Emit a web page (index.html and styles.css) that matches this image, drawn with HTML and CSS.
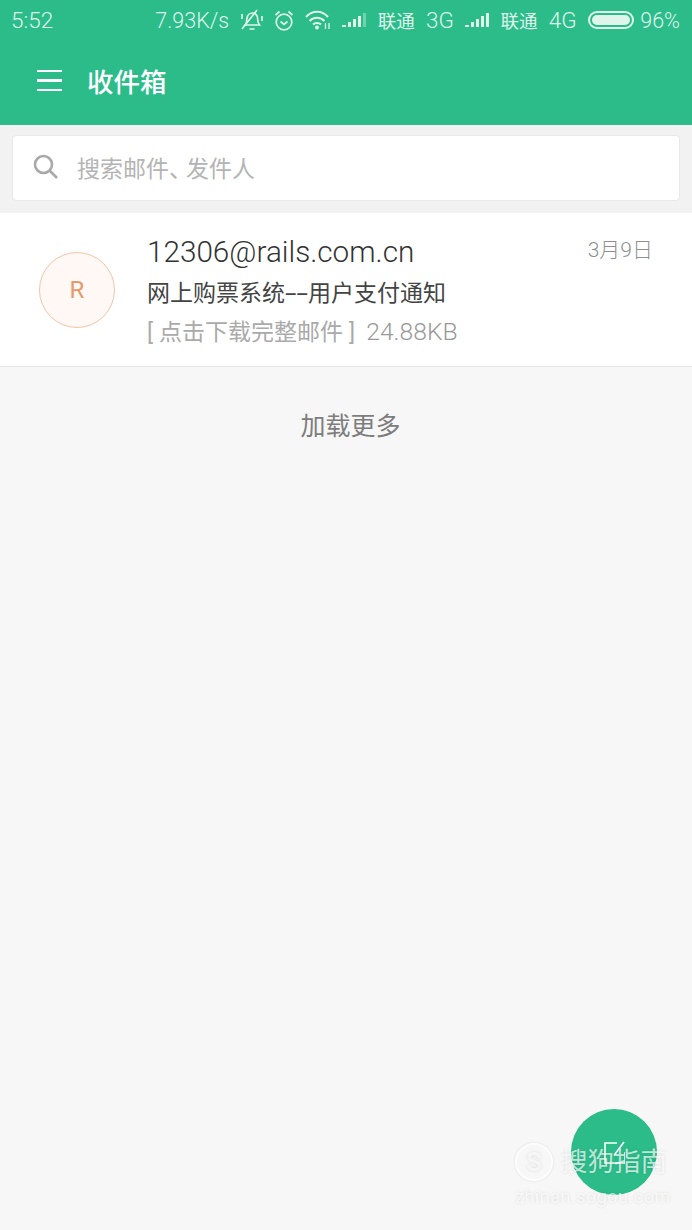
FILE: index.html
```html
<!DOCTYPE html>
<html lang="zh-CN">
<head>
  <meta charset="UTF-8">
  <meta name="viewport" content="width=device-width, initial-scale=1.0">
  <title>收件箱</title>
  <link rel="stylesheet" href="styles.css">
</head>
<body>
  <header class="top">
    <div class="status">
      <span class="time">5:52</span>
      <div class="status-right">
        <span class="speed">7.93K/s</span>
        <svg class="ic" width="22" height="22" viewBox="0 0 22 22" fill="none" stroke="currentColor" stroke-width="1.700">
          <path d="M4 16c2-2 1.500-4 2-7s3-5 5.500-5 5 2 5 5 .5 5 2 7z"/>
          <path d="M8.500 20h5M1 20L16 1M1 5v5M21 7v5"/>
        </svg>
        <svg class="ic" width="20" height="21" viewBox="0 0 20 21" fill="none" stroke="currentColor" stroke-width="1.700">
          <circle cx="10" cy="12" r="7.800"/>
          <path d="M6.500 11.500l3.500 3 3.500-3M1.500 5l4-3.500M18.500 5l-4-3.500"/>
        </svg>
        <svg class="ic" width="26" height="20" viewBox="0 0 26 20" fill="none" stroke="currentColor" stroke-width="2">
          <path d="M1 7c6-7 16-7 22 0M4.500 11c4-4.500 11-4.500 15 0M8 14.500c2-2 6-2 8 0"/>
          <circle cx="12" cy="17.500" r="2" fill="currentColor" stroke="none"/>
          <path d="M20.500 13v6M24 13v6" stroke-width="1.300"/>
        </svg>
        <svg class="ic" width="24" height="16" viewBox="0 0 24 16" fill="currentColor">
          <rect x="0" y="13" width="4" height="2"/><rect x="6" y="10" width="3" height="5"/><rect x="11" y="7" width="3" height="8"/><rect x="16" y="4" width="3" height="11"/><rect x="21" y="1" width="3" height="14" opacity=".4"/>
        </svg>
        <span class="zh">联通</span>
        <span class="net">3G</span>
        <svg class="ic" width="24" height="16" viewBox="0 0 24 16" fill="currentColor">
          <rect x="0" y="13" width="4" height="2"/><rect x="6" y="10" width="3" height="5"/><rect x="11" y="7" width="3" height="8"/><rect x="16" y="4" width="3" height="11"/><rect x="21" y="1" width="3" height="14"/>
        </svg>
        <span class="zh">联通</span>
        <span class="net">4G</span>
        <div class="battery"><div class="battery-fill"></div></div>
        <span class="percent">96%</span>
      </div>
    </div>
    <div class="appbar">
      <div class="menu"><i></i><i></i><i></i></div>
      <h1>收件箱</h1>
    </div>
  </header>

  <div class="search-wrap">
    <div class="search">
      <svg width="26" height="26" viewBox="0 0 26 26" fill="none" stroke="#a9a9a9" stroke-width="2.600">
        <circle cx="10.500" cy="10.500" r="8.500"/>
        <path d="M16.500 16.500l7.500 7.500"/>
      </svg>
      <span>搜索邮件<span class="tight">、</span>发件人</span>
    </div>
  </div>

  <section class="mail">
    <div class="avatar">R</div>
    <div class="mail-body">
      <div class="mail-top">
        <span class="sender">12306@rails.com.cn</span>
        <span class="date">3月9日</span>
      </div>
      <div class="subject">网上购票系统<span class="dash">--</span>用户支付通知</div>
      <div class="preview"><span class="br-open">[</span>点击下载完整邮件<span class="br-close">]</span><span class="size">24.88KB</span></div>
    </div>
  </section>

  <div class="more">加载更多</div>

  <button class="fab">
    <svg width="22" height="23" viewBox="0 0 22 23" fill="none" stroke="#fff" stroke-width="1.600">
      <path d="M14 2H2v20h20V11M11 14.500L21 1"/>
    </svg>
  </button>

  <div class="mark">
    <div class="mark-top">
      <span class="mark-logo"><span class="mark-s">S</span></span>
      <span class="mark-name">搜狗指南</span>
    </div>
    <div class="mark-url">zhinan.sogou.com</div>
  </div>
</body>
</html>
```

FILE: styles.css
```css
* {
  box-sizing: border-box;
}
html, body {
  height: 100%;
}
body {
  margin: 0;
  position: relative;
  overflow: hidden;
  background: #f7f7f7;
  font-family: Roboto, "Noto Sans CJK SC", sans-serif;
}
.top {
  height: 125px;
  background: #2cbc8a;
  color: #fff;
}
.status {
  height: 40px;
  padding: 0 12px 0 11px;
  display: flex;
  align-items: center;
  justify-content: space-between;
  font-size: 21.500px;
  font-weight: 300;
  color: #dff5ec;
}
.time {
  font-size: 22.500px;
}
.status-right {
  display: flex;
  align-items: center;
  gap: 11.300px;
}
.zh {
  font-size: 18.500px;
  font-weight: 400;
}
.net {
  font-size: 22.500px;
}
.percent {
  margin-left: -5px;
}
.ic {
  display: block;
}
.battery {
  width: 46px;
  height: 18px;
  border: 2px solid #dff5ec;
  border-radius: 9px;
  padding: 2px;
}
.battery-fill {
  height: 100%;
  background: #dff5ec;
  border-radius: 5px;
}
.appbar {
  height: 85px;
  padding: 0 0 4px 37px;
  display: flex;
  align-items: center;
}
.menu {
  width: 25px;
  display: flex;
  flex-direction: column;
  gap: 7px;
}
.menu i {
  display: block;
  height: 2.500px;
  background: #fff;
}
.appbar h1 {
  margin: 0 0 0 25px;
  font-size: 26.500px;
  font-weight: 500;
}
.search-wrap {
  padding: 10px 12px 12px;
  background: #f2f2f2;
}
.search {
  height: 66px;
  background: #fff;
  border: 1px solid #e8e8e8;
  border-radius: 4px;
  padding: 0 0 3px 20px;
  display: flex;
  align-items: center;
  gap: 18px;
  font-size: 23px;
  color: #b4b4b4;
}
.tight {
  letter-spacing: -6px;
}
.mail {
  height: 154px;
  background: #fff;
  border-bottom: 1px solid #e6e6e6;
  display: flex;
  align-items: center;
  padding-left: 39px;
}
.avatar {
  width: 76px;
  height: 76px;
  border-radius: 50%;
  border: 1px solid #f4c4a8;
  background: #fff8f4;
  color: #e59a6c;
  font-size: 24px;
  display: flex;
  align-items: center;
  justify-content: center;
}
.mail-body {
  flex: 1;
  align-self: flex-start;
  margin-left: 32px;
  padding: 20px 39px 0 0;
}
.mail-top {
  display: flex;
  justify-content: space-between;
}
.sender {
  font-size: 29.700px;
  font-weight: 300;
  line-height: 38px;
  color: #333;
}
.date {
  font-size: 21px;
  font-weight: 300;
  line-height: 34px;
  color: #8f8f8f;
}
.subject {
  margin-top: 4px;
  font-size: 23px;
  line-height: 38px;
  color: #444;
}
.dash {
  display: inline-block;
  width: 23px;
  transform: scaleX(1.800);
  transform-origin: left;
}
.preview {
  font-size: 23px;
  line-height: 38px;
  color: #aaa;
}
.br-open {
  margin-right: 6px;
}
.br-close {
  margin-left: 6px;
}
.size {
  margin-left: 11px;
  font-size: 24.700px;
  font-weight: 300;
  color: #999;
}
.more {
  margin: 41px 0 0 9px;
  text-align: center;
  font-size: 25px;
  line-height: 38px;
  color: #7d7d7d;
}
.fab {
  position: absolute;
  left: 571px;
  top: 1109px;
  width: 86px;
  height: 86px;
  padding: 0;
  border: none;
  border-radius: 50%;
  background: #2cbc8a;
  display: flex;
  align-items: center;
  justify-content: center;
}
.mark {
  position: absolute;
  left: 515px;
  top: 1143px;
  width: 155px;
  color: rgba(255, 255, 255, 0.7);
  text-shadow: 0 0 3px rgba(0, 0, 0, 0.12);
}
.mark-top {
  display: flex;
  align-items: center;
  gap: 8px;
}
.mark-logo {
  width: 38px;
  height: 38px;
  border: 2px solid rgba(255, 255, 255, 0.7);
  box-shadow: 0 0 3px rgba(0, 0, 0, 0.1);
  border-radius: 50%;
  display: flex;
  align-items: center;
  justify-content: center;
}
.mark-s {
  width: 28px;
  height: 28px;
  border-radius: 50%;
  display: flex;
  align-items: center;
  justify-content: center;
  font-size: 26px;
  font-weight: 700;
  line-height: 1;
}
.mark-name {
  font-size: 26.500px;
  line-height: 38px;
  white-space: nowrap;
}
.mark-url {
  font-size: 18px;
  line-height: 20px;
  margin-top: 6px;
  letter-spacing: 0.500px;
  white-space: nowrap;
}
```
